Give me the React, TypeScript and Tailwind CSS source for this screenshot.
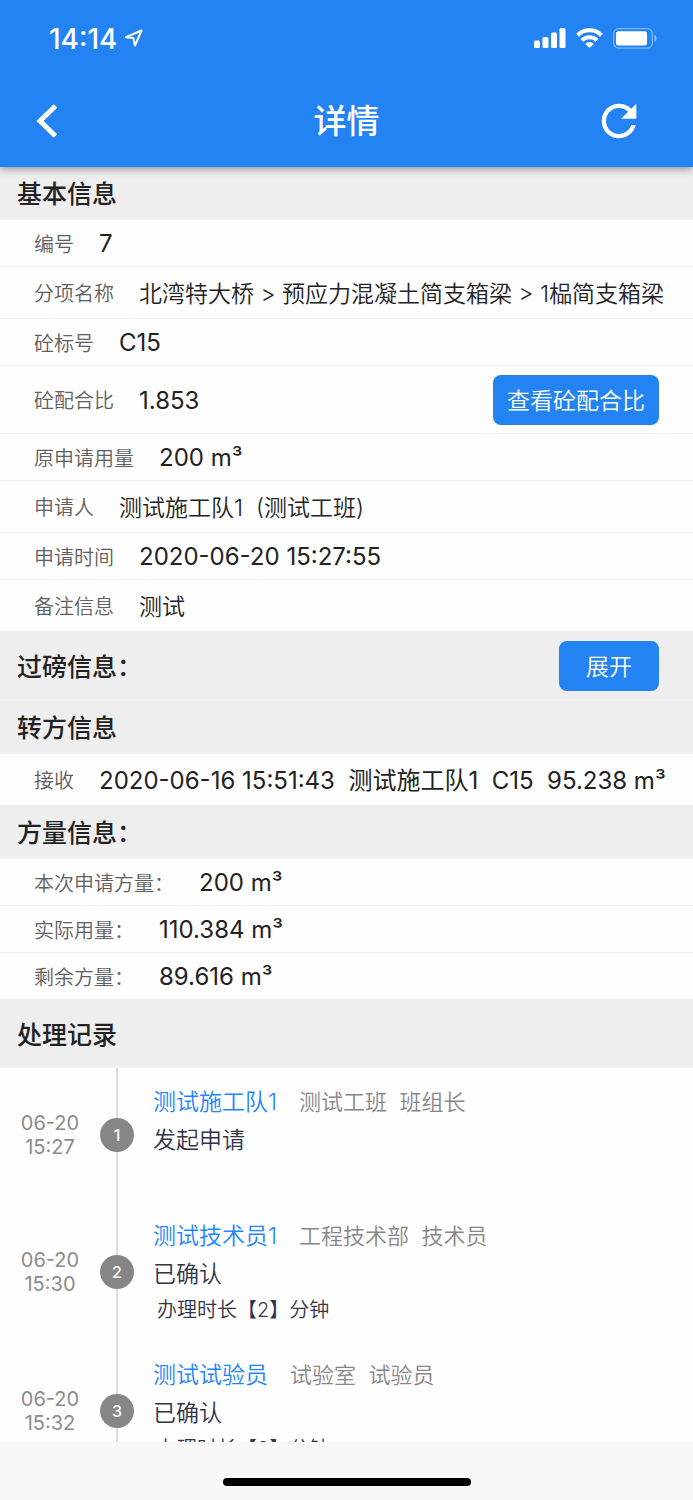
import clsx from "clsx";
import { MdRefresh } from "react-icons/md";

const basicInfo = [
  { label: "编号", value: "7" },
  { label: "分项名称", value: "北湾特大桥 > 预应力混凝土简支箱梁 > 1榀简支箱梁", tall: true },
  { label: "砼标号", value: "C15" },
  { label: "砼配合比", value: "1.853", action: "查看砼配合比" },
  { label: "原申请用量", value: "200 m³" },
  { label: "申请人", value: "测试施工队1  (测试工班)", tall: true },
  { label: "申请时间", value: "2020-06-20 15:27:55" },
  { label: "备注信息", value: "测试", tall: true },
];

const transferInfo = [
  { label: "接收", value: "2020-06-16 15:51:43  测试施工队1  C15  95.238 m³", tall: true, large: true },
];

const volumeInfo = [
  { label: "本次申请方量：", value: "200 m³" },
  { label: "实际用量：", value: "110.384 m³" },
  { label: "剩余方量：", value: "89.616 m³" },
];

const records = [
  { date: "06-20", time: "15:27", name: "测试施工队1", role: "测试工班  班组长", status: "发起申请" },
  { date: "06-20", time: "15:30", name: "测试技术员1", role: "工程技术部  技术员", status: "已确认", duration: "办理时长【2】分钟" },
  { date: "06-20", time: "15:32", name: "测试试验员", role: "试验室  试验员", status: "已确认", duration: "办理时长【2】分钟" },
];

function StatusBar() {
  return (
    <div className="flex h-19 items-center justify-between pr-9 pl-[49px] text-white">
      <div className="flex items-center gap-2">
        <span className="pt-0.5 text-[28px] font-medium">14:14</span>
        <svg width="18" height="18" viewBox="0 0 18 18" fill="none" stroke="currentColor" strokeWidth="2" strokeLinejoin="round">
          <path d="M16.5 1.5 1 8.2l7.4.9 1.6 7.4z" />
        </svg>
      </div>
      <div className="flex items-center">
        <svg width="32" height="20" viewBox="0 0 32 20" fill="currentColor">
          <rect x="0" y="12.5" width="6" height="7.5" rx="1.5" />
          <rect x="8.5" y="9" width="6" height="11" rx="1.5" />
          <rect x="17" y="4.5" width="6" height="15.5" rx="1.5" />
          <rect x="25.5" y="0" width="6" height="20" rx="1.5" />
        </svg>
        <svg className="ml-2.5" width="27" height="20" viewBox="0 0 27 20" fill="none" stroke="currentColor" strokeWidth="4">
          <path d="M1.6 7.2a17 17 0 0 1 23.8 0" />
          <path d="M6 12.4a10.7 10.7 0 0 1 15 0" />
          <path d="M13.5 20 9.2 15.9a6 6 0 0 1 8.6 0z" fill="currentColor" stroke="none" />
        </svg>
        <svg className="ml-2.5" width="44" height="21" viewBox="0 0 44 21" fill="none">
          <rect x="0.7" y="0.7" width="38.6" height="19.4" rx="5" stroke="#fff" strokeOpacity="0.4" strokeWidth="1.3" />
          <rect x="3" y="3.2" width="31" height="14.4" rx="2.5" fill="#fff" />
          <path d="M41.5 7c2.8 1.3 2.8 5.7 0 7z" fill="#fff" fillOpacity="0.5" />
        </svg>
      </div>
    </div>
  );
}

function ActionButton({ children, className }: { children: string; className?: string }) {
  return (
    <button
      type="button"
      className={clsx("h-[50px] shrink-0 rounded-lg bg-[#2483f3] pt-[3px] text-[23px] font-[350] text-white", className)}
    >
      {children}
    </button>
  );
}

function SectionTitle({ title, className, action }: { title: string; className?: string; action?: string }) {
  return (
    <div className={clsx("flex shrink-0 items-center justify-between border-b-2 border-[#f2f2f2] bg-[#eeeeee] pr-[34px] pl-[17px]", className ?? "h-[53px]")}>
      <h2 className="pt-[5px] text-[25px] font-medium text-[#222]">{title}</h2>
      {action && <ActionButton className="w-[100px]">{action}</ActionButton>}
    </div>
  );
}

function InfoList({ rows }) {
  return (
    <dl className="shrink-0">
      {rows.map((row) => (
        <div
          key={row.label}
          className={clsx(
            "flex items-center border-b border-[#efefef] pl-[34px]",
            row.action ? "h-[68px] pr-[34px]" : row.tall ? "h-[52px]" : "h-[47px]"
          )}
        >
          <dt className="mr-[25px] shrink-0 pt-[3px] text-xl font-[350] text-[#606060]">{row.label}</dt>
          <dd
            className={clsx(
              "flex-1 whitespace-pre text-[#222]",
              row.tall ? "pt-[3px]" : "pt-0.5",
              row.tall && !row.large ? "text-[23px] font-[350]" : "text-2xl"
            )}
          >
            {row.value}
          </dd>
          {row.action && <ActionButton className="px-3.5">{row.action}</ActionButton>}
        </div>
      ))}
    </dl>
  );
}

function Timeline() {
  return (
    <ol className="min-h-0 flex-1 overflow-hidden">
      {records.map((r, i) => (
        <li key={r.time} className="flex min-h-[134px]">
          <div className="flex w-[100px] shrink-0 flex-col items-center justify-center text-xl leading-6 text-[#8c8c8c]">
            <span>{r.date}</span>
            <span>{r.time}</span>
          </div>
          <div className="flex w-[34px] shrink-0 flex-col items-center">
            <span className="w-0.5 flex-1 bg-[#ddd]" />
            <span className="flex size-[34px] items-center justify-center rounded-full bg-[#868686] text-base font-medium text-white">
              {i + 1}
            </span>
            <span className="w-0.5 flex-1 bg-[#ddd]" />
          </div>
          <div className="pt-[15px] pb-3.5 pl-[19px] text-[23px] leading-[38px] font-[350] whitespace-pre text-[#33334a]">
            <p className="flex items-center gap-[22px]">
              <span className="text-[#1e86ff]">{r.name}</span>
              <span className="text-[22px] text-[#888]">{r.role}</span>
            </p>
            <p>{r.status}</p>
            {r.duration && <p className="pl-1 text-xl leading-[34px]">{r.duration}</p>}
          </div>
        </li>
      ))}
    </ol>
  );
}

export default function App() {
  return (
    <div className="flex h-screen flex-col overflow-hidden bg-[#fefefe] font-['Inter','Noto_Sans_CJK_SC',sans-serif]">
      <header className="z-10 h-[167px] shrink-0 bg-[#2483f3] shadow-[0_2px_8px_rgba(0,0,0,0.4)]">
        <StatusBar />
        <div className="flex h-[90px] items-center px-9 text-white">
          <button type="button" aria-label="返回" className="w-16">
            <svg width="22" height="34" viewBox="0 0 22 34" fill="none" stroke="currentColor" strokeWidth="5">
              <path d="M19.5 2 4 17l15.5 15" />
            </svg>
          </button>
          <h1 className="flex-1 pt-0.5 text-center text-[33px] font-medium">详情</h1>
          <button type="button" aria-label="刷新" className="w-16">
            <MdRefresh size={52} />
          </button>
        </div>
      </header>
      <main className="flex min-h-0 flex-1 flex-col">
        <SectionTitle title="基本信息" />
        <InfoList rows={basicInfo} />
        <SectionTitle title="过磅信息：" className="h-[69px]" action="展开" />
        <SectionTitle title="转方信息" />
        <InfoList rows={transferInfo} />
        <SectionTitle title="方量信息：" />
        <InfoList rows={volumeInfo} />
        <SectionTitle title="处理记录" className="h-[68px]" />
        <Timeline />
      </main>
      <footer className="flex h-[58px] shrink-0 items-end justify-center bg-[#f8f8f8] pb-3.5">
        <div className="h-2 w-[248px] rounded-full bg-black" />
      </footer>
    </div>
  );
}
